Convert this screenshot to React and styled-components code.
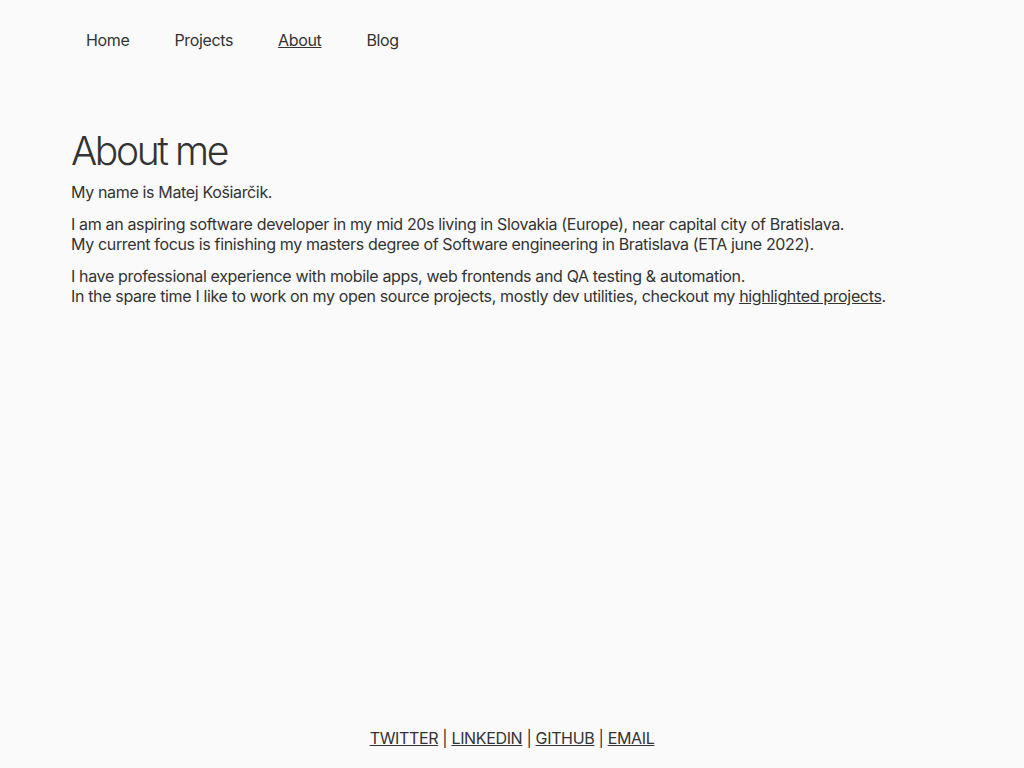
import React from 'react';
import styled, { createGlobalStyle } from 'styled-components';

const GlobalStyle = createGlobalStyle`
  html, body {
    margin: 0;
    padding: 0;
    background-color: #fafafa;
  }

  body {
    font-family: Inter, "Noto Sans", sans-serif;
    color: #333;
    font-size: 16px;
    line-height: 20px;
    letter-spacing: -0.35px;
  }
`;

const Page = styled.div`
  min-height: 100vh;
  display: flex;
  flex-direction: column;
`;

const Nav = styled.nav`
  display: flex;
  padding: 30px 0 0 63.5px;
`;

const NavLink = styled.a`
  padding: 0 22.5px;
  color: #333;
  text-decoration: ${(props) => (props.active ? 'underline' : 'none')};
  cursor: pointer;
`;

const Main = styled.main`
  flex: 1;
  padding: 77px 71px 0;
`;

const Title = styled.h1`
  margin: 0 0 7px;
  font-size: 39px;
  line-height: 48px;
  font-weight: 300;
  letter-spacing: -2.4px;
  color: #333;
`;

const Paragraph = styled.p`
  margin: 0 0 12px;
`;

const Link = styled.a`
  color: #333;
  text-decoration: underline;
`;

const Footer = styled.footer`
  text-align: center;
  padding-bottom: 20px;
`;

const navItems = ['Home', 'Projects', 'About', 'Blog'];
const socials = ['TWITTER', 'LINKEDIN', 'GITHUB', 'EMAIL'];

function App() {
  return (
    <Page>
      <GlobalStyle />
      <Nav>
        {navItems.map((item) => (
          <NavLink key={item} active={item === 'About' ? 1 : 0}>
            {item}
          </NavLink>
        ))}
      </Nav>
      <Main>
        <Title>About me</Title>
        <Paragraph>My name is Matej Košiarčik.</Paragraph>
        <Paragraph>
          I am an aspiring software developer in my mid 20s living in Slovakia (Europe), near capital city of Bratislava.
          <br />
          My current focus is finishing my masters degree of Software engineering in Bratislava (ETA june 2022).
        </Paragraph>
        <Paragraph>
          I have professional experience with mobile apps, web frontends and QA testing &amp; automation.
          <br />
          In the spare time I like to work on my open source projects, mostly dev utilities, checkout my{' '}
          <Link>highlighted projects</Link>.
        </Paragraph>
      </Main>
      <Footer>
        {socials.map((s, i) => (
          <React.Fragment key={s}>
            {i > 0 && ' | '}
            <Link>{s}</Link>
          </React.Fragment>
        ))}
      </Footer>
    </Page>
  );
}

export default App;
